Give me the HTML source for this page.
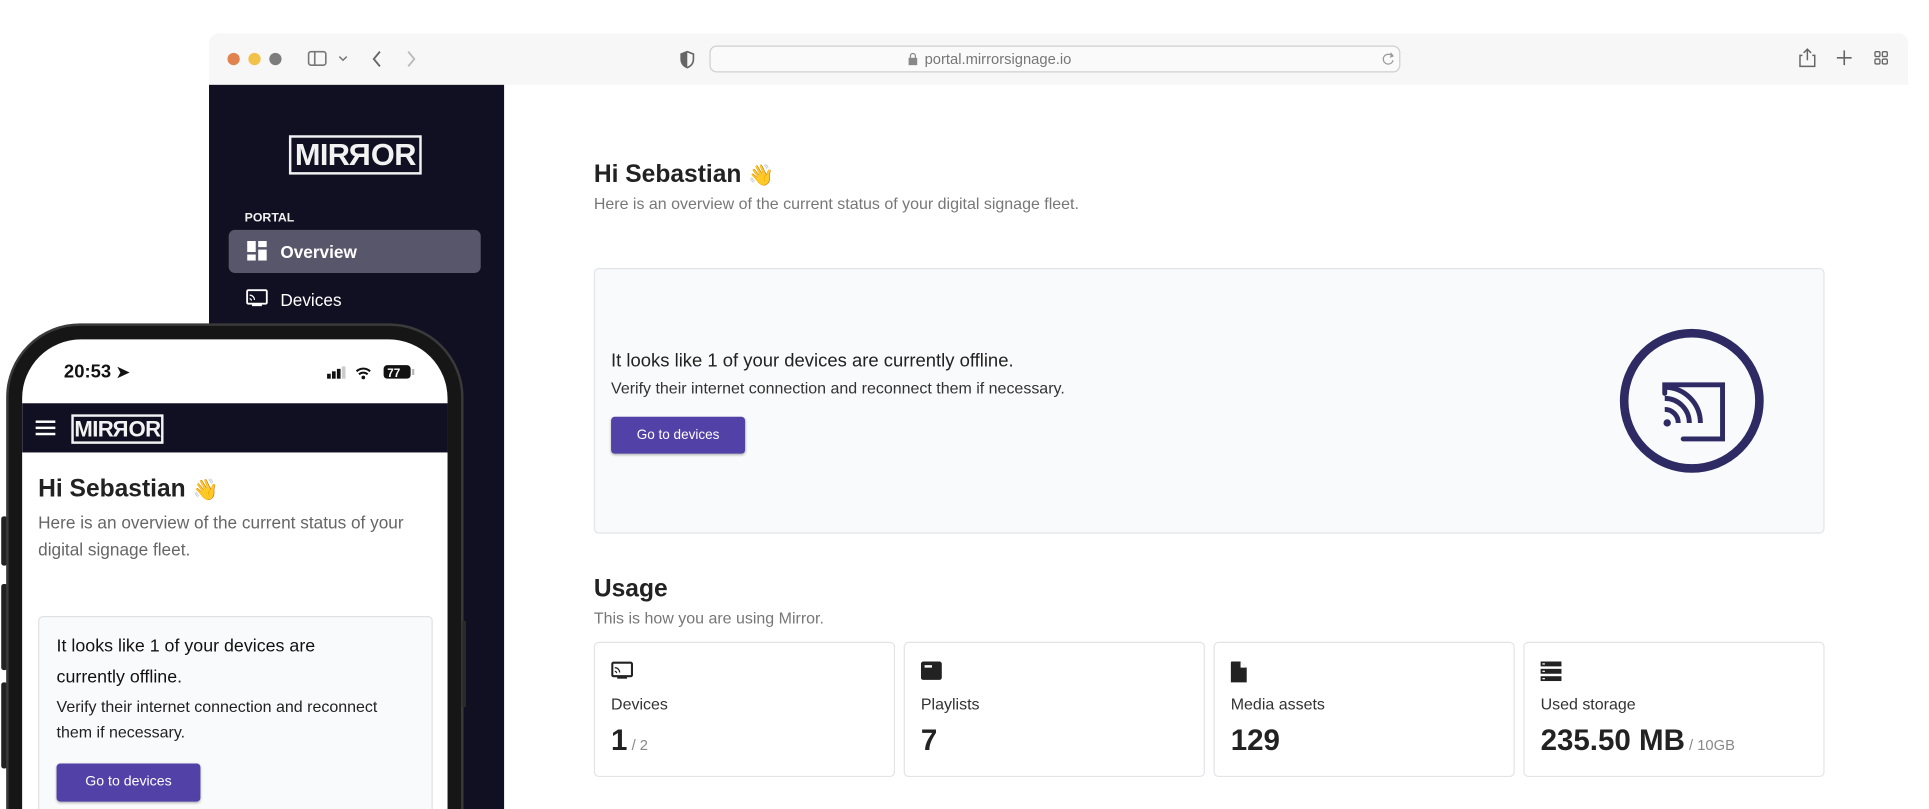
<!DOCTYPE html>
<html><head><meta charset="utf-8">
<style>
*{margin:0;padding:0;box-sizing:border-box}
html,body{width:1929px;height:809px;overflow:hidden;background:#fff;font-family:"Liberation Sans",sans-serif}
#w{position:absolute;left:0;top:0;width:1569px;height:658px;overflow:hidden;transform:scale(1.2295);transform-origin:0 0}
.a{position:absolute}
.logo{position:absolute;border:2px solid #f2f2f2;color:#f2f2f2;font-weight:bold;text-align:center;letter-spacing:-0.5px;background:#110f22}
.flip{display:inline-block;transform:scaleX(-1)}
.t{position:absolute;white-space:nowrap}
.card{position:absolute;top:522px;width:245px;height:110px;border:1px solid #e3e4e8;border-radius:4px;background:#fff}
.card .lb{position:absolute;left:13px;top:42px;font-size:13px;color:#333}
.card .nm{position:absolute;left:13px;top:66px;font-size:24px;font-weight:bold;color:#222}
.card .nm small{font-size:12px;font-weight:normal;color:#888}
.card svg{position:absolute;left:13px;top:15px}
</style></head><body><div id="w">

<!-- browser chrome -->
<div class="a" style="left:170px;top:27px;width:1382px;height:42px;background:#f7f7f7;border-radius:8px 8px 0 0"></div>
<div class="a" style="left:185px;top:43px;width:10px;height:10px;border-radius:50%;background:#e0834e"></div>
<div class="a" style="left:202px;top:43px;width:10px;height:10px;border-radius:50%;background:#f1c148"></div>
<div class="a" style="left:219px;top:43px;width:10px;height:10px;border-radius:50%;background:#7c7c7c"></div>
<svg class="a" style="left:250px;top:40px" width="40" height="16" viewBox="0 0 40 16"><rect x="1" y="2" width="14" height="11" rx="2" fill="none" stroke="#777" stroke-width="1.3"/><line x1="6" y1="2" x2="6" y2="13" stroke="#777" stroke-width="1.3"/><path d="M26 6l3 3 3-3" fill="none" stroke="#777" stroke-width="1.2"/></svg>
<svg class="a" style="left:300px;top:40px" width="45" height="16"><path d="M9 2l-5 6 5 6" fill="none" stroke="#666" stroke-width="1.5"/><path d="M32 2l5 6-5 6" fill="none" stroke="#bbb" stroke-width="1.5"/></svg>
<svg class="a" style="left:552px;top:41px" width="14" height="15"><path d="M7 1l5 2v4c0 4-2.5 6-5 7-2.5-1-5-3-5-7V3z" fill="none" stroke="#666" stroke-width="1.3"/><path d="M7 1v13c-2.5-1-5-3-5-7V3z" fill="#666"/></svg>
<div class="a" style="left:577px;top:37px;width:562px;height:22px;border:1px solid #cfcfcf;border-radius:6px;background:#fafafa"></div>
<svg class="a" style="left:738px;top:42px" width="10" height="12"><rect x="1" y="5" width="7" height="6" fill="#888"/><path d="M2.5 5V3.5a2 2 0 014 0V5" fill="none" stroke="#888"/></svg>
<div class="t" style="left:752px;top:41px;font-size:12px;color:#777">portal.mirrorsignage.io</div>
<svg class="a" style="left:1123px;top:41px" width="12" height="13"><path d="M9.5 5A4 4 0 1 0 10 8" fill="none" stroke="#999" stroke-width="1"/><path d="M8 2l2 2.5-2.5 1" fill="none" stroke="#999"/></svg>
<svg class="a" style="left:1462px;top:38px" width="80" height="18"><path d="M4 7H2v9h12V7h-2M8 2v9M5 5l3-3 3 3" fill="none" stroke="#666" stroke-width="1.2"/><path d="M38 3v12M32 9h12" stroke="#666" stroke-width="1.3"/><g fill="none" stroke="#666" stroke-width="1.1"><rect x="63" y="4" width="4" height="4" rx="1"/><rect x="69" y="4" width="4" height="4" rx="1"/><rect x="63" y="10" width="4" height="4" rx="1"/><rect x="69" y="10" width="4" height="4" rx="1"/></g></svg>

<!-- sidebar -->
<div class="a" style="left:170px;top:69px;width:240px;height:590px;background:#110f22"></div>
<div class="logo" style="left:235px;top:110px;width:108px;height:32px;font-size:25px;line-height:28px">MIR<span class="flip">R</span>OR</div>
<div class="t" style="left:199px;top:172px;font-size:10px;font-weight:bold;color:#f0f0f0">PORTAL</div>
<div class="a" style="left:186px;top:187px;width:205px;height:35px;background:#57566a;border-radius:5px"></div>
<svg class="a" style="left:201px;top:196px" width="16" height="16"><rect x="0" y="0" width="7" height="9" fill="#fff"/><rect x="9" y="0" width="7" height="5" fill="#fff"/><rect x="9" y="7" width="7" height="9" fill="#fff"/><rect x="0" y="11" width="7" height="5" fill="#fff"/></svg>
<div class="t" style="left:228px;top:197px;font-size:14px;font-weight:bold;color:#fff">Overview</div>
<svg class="a" style="left:200px;top:235px" width="18" height="16"><rect x="1" y="1" width="16" height="11" rx="1" fill="none" stroke="#fff" stroke-width="1.5"/><rect x="5" y="12" width="8" height="2" fill="#fff"/><path d="M3 5a4 4 0 014 4M3 8a1.5 1.5 0 011.5 1.5" fill="none" stroke="#fff"/></svg>
<div class="t" style="left:228px;top:236px;font-size:14px;color:#fff">Devices</div>

<!-- main -->
<div class="t" style="left:483px;top:131px;font-size:20px;font-weight:bold;color:#222">Hi Sebastian <span style="font-size:17px">👋</span></div>
<div class="t" style="left:483px;top:158px;font-size:13px;color:#777">Here is an overview of the current status of your digital signage fleet.</div>

<div class="a" style="left:483px;top:218px;width:1001px;height:216px;background:#f9fafb;border:1px solid #e2e4e8;border-radius:4px"></div>
<div class="t" style="left:497px;top:285px;font-size:15px;color:#222">It looks like 1 of your devices are currently offline.</div>
<div class="t" style="left:497px;top:308px;font-size:13px;color:#333">Verify their internet connection and reconnect them if necessary.</div>
<div class="a" style="left:497px;top:339px;width:109px;height:30px;background:#5242a8;border-radius:3px;color:#fff;font-size:11px;line-height:30px;text-align:center;box-shadow:0 1px 2px rgba(0,0,0,.3)">Go to devices</div>
<svg class="a" style="left:1314px;top:265px" width="124" height="124" viewBox="0 0 124 124"><circle cx="62" cy="61" r="55" fill="none" stroke="#2e2a63" stroke-width="7"/><path d="M40 55v-7h47v44H55" fill="none" stroke="#2e2a63" stroke-width="4" stroke-linecap="round"/><circle cx="42" cy="79" r="3" fill="#2e2a63"/><path d="M40 68a11 11 0 0111 11M40 59a20 20 0 0120 20M40 50a29 29 0 0129 29" fill="none" stroke="#2e2a63" stroke-width="4"/></svg>

<div class="t" style="left:483px;top:468px;font-size:20px;font-weight:bold;color:#222">Usage</div>
<div class="t" style="left:483px;top:495px;font-size:13px;color:#777">This is how you are using Mirror.</div>

<div class="card" style="left:483px"><svg width="18" height="16"><rect x="1" y="1" width="16" height="11" rx="1" fill="none" stroke="#222" stroke-width="1.7"/><rect x="5" y="12" width="8" height="2" fill="#222"/><path d="M3 5a4 4 0 014 4M3 8a1.5 1.5 0 011.5 1.5" fill="none" stroke="#222"/></svg><div class="lb">Devices</div><div class="nm">1<small> / 2</small></div></div>
<div class="card" style="left:735px"><svg width="18" height="16"><rect x="0" y="0" width="17" height="15" rx="2" fill="#222"/><rect x="3" y="3" width="6" height="2" fill="#fff"/></svg><div class="lb">Playlists</div><div class="nm">7</div></div>
<div class="card" style="left:987px"><svg width="14" height="18"><path d="M0 1a1 1 0 011-1h7l5 5v12H0z" fill="#222"/><path d="M8 0v5h5" fill="#fff"/></svg><div class="lb">Media assets</div><div class="nm">129</div></div>
<div class="card" style="left:1239px"><svg width="18" height="16"><rect x="0" y="0" width="17" height="4" fill="#222"/><rect x="0" y="6" width="17" height="4" fill="#222"/><rect x="0" y="12" width="17" height="4" fill="#222"/><rect x="1.5" y="1.5" width="2" height="1" fill="#fff"/><rect x="1.5" y="7.5" width="2" height="1" fill="#fff"/><rect x="1.5" y="13.5" width="2" height="1" fill="#fff"/></svg><div class="lb">Used storage</div><div class="nm">235.50 MB<small> / 10GB</small></div></div>

<!-- phone -->
<div class="a" style="left:1px;top:420px;width:5px;height:40px;background:#222;border-radius:2px"></div>
<div class="a" style="left:1px;top:475px;width:5px;height:70px;background:#222;border-radius:2px"></div>
<div class="a" style="left:1px;top:555px;width:5px;height:70px;background:#222;border-radius:2px"></div>
<div class="a" style="left:5px;top:263px;width:372px;height:460px;background:#161616;border-radius:60px;border:2px solid #3a3a3a"></div>
<div class="a" style="left:18px;top:276px;width:346px;height:440px;background:#fff;border-radius:48px;overflow:hidden">
  <div class="t" style="left:34px;top:18px;font-size:15px;font-weight:bold;color:#111">20:53 <span style="font-size:13px">➤</span></div>
  <svg class="a" style="left:248px;top:20px" width="100" height="14"><rect x="0" y="8" width="3" height="4" fill="#111"/><rect x="4" y="6" width="3" height="6" fill="#111"/><rect x="8" y="4" width="3" height="8" fill="#111"/><rect x="12" y="2" width="3" height="10" fill="#ccc"/><path d="M24 6a8 8 0 0111 0M26 8.5a5 5 0 017 0" fill="none" stroke="#111" stroke-width="1.7"/><circle cx="29.5" cy="11" r="1.5" fill="#111"/><rect x="46" y="1" width="22" height="11" rx="3" fill="#111"/><text x="49" y="10.5" font-size="9.5" font-weight="bold" fill="#fff" font-family="Liberation Sans">77</text><rect x="69" y="4" width="2" height="5" fill="#bbb"/></svg>
  <div class="a" style="left:0;top:52px;width:346px;height:40px;background:#110f22"></div>
  <div class="a" style="left:11px;top:66px;width:16px;height:2px;background:#fff;box-shadow:0 5px 0 #fff,0 10px 0 #fff"></div>
  <div class="logo" style="left:40px;top:61px;width:75px;height:24px;font-size:18px;line-height:20px">MIR<span class="flip">R</span>OR</div>
  <div class="t" style="left:13px;top:111px;font-size:20px;font-weight:bold;color:#222">Hi Sebastian <span style="font-size:17px">👋</span></div>
  <div class="t" style="left:13px;top:138px;font-size:14px;line-height:22px;color:#666">Here is an overview of the current status of your<br>digital signage fleet.</div>
  <div class="a" style="left:13px;top:225px;width:321px;height:260px;background:#f9fafb;border:1px solid #dfe1e5;border-radius:4px"></div>
  <div class="t" style="left:28px;top:238px;font-size:14.5px;line-height:25px;color:#111">It looks like 1 of your devices are<br>currently offline.</div>
  <div class="t" style="left:28px;top:288px;font-size:13px;line-height:21px;color:#222">Verify their internet connection and reconnect<br>them if necessary.</div>
  <div class="a" style="left:28px;top:345px;width:117px;height:31px;background:#5242a8;border-radius:3px;color:#fff;font-size:11.5px;line-height:31px;text-align:center;box-shadow:0 1px 2px rgba(0,0,0,.3)">Go to devices</div>
</div>
<div class="a" style="left:376px;top:505px;width:3px;height:70px;background:#2a2a2a"></div>

</div></body></html>
